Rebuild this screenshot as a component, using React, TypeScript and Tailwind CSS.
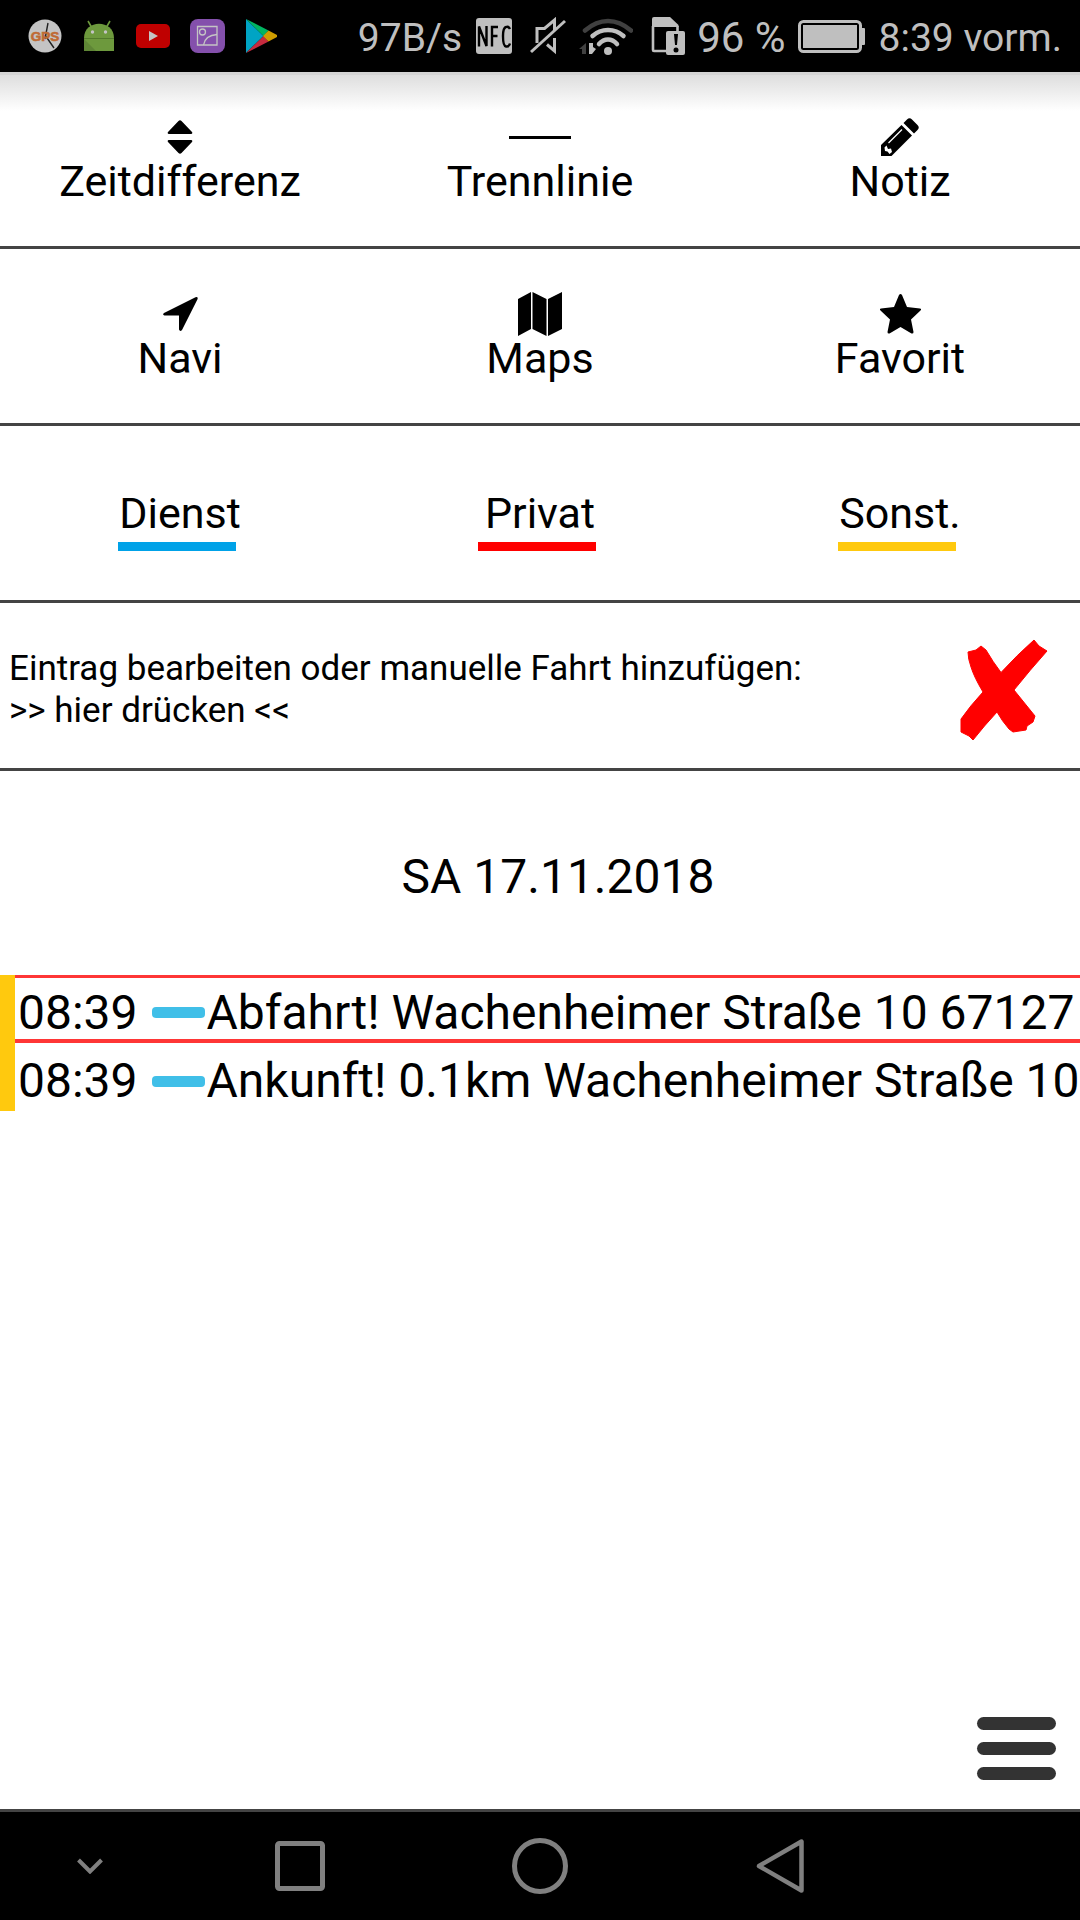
import React from "react";

const label = "text-[43px] leading-[52px]";

function Tile({ icon, text }: { icon: React.ReactNode; text: string }) {
  return (
    <button className="flex flex-col items-center">
      <span className="flex h-9 items-center [&>svg]:shrink-0">{icon}</span>
      <span className={label}>{text}</span>
    </button>
  );
}

function Category({ text, bar }: { text: string; bar: string }) {
  return (
    <button className="flex flex-col items-center">
      <span className={label}>{text}</span>
      <span className={`mt-[3px] mr-[6px] h-[9px] w-[118px] ${bar}`} />
    </button>
  );
}

function Trip({ time, text, line }: { time: string; text: string; line: string }) {
  return (
    <li className={`flex h-[68px] items-center overflow-hidden whitespace-nowrap pt-2 pl-[3px] text-[48px] ${line}`}>
      <span>{time}</span>
      <span className="ml-[14px] h-[11px] w-[53px] shrink-0 rounded-sm bg-[#40bfe8]" />
      <span className="ml-0.5">{text}</span>
    </li>
  );
}

function StatusBar() {
  return (
    <header className="flex h-[72px] shrink-0 items-center justify-between bg-black pr-[18px] pl-7 text-[#bfbfbf]">
      <div className="flex items-center">
        <svg className="h-[34px] w-[34px]" viewBox="0 0 34 34">
          <circle cx="17" cy="17" r="16.5" fill="#c4c4c4" />
          <path d="M17 20 20 4M17 16l9 13" stroke="#222" strokeWidth="1.4" fill="none" />
          <text x="17" y="22" textAnchor="middle" fontSize="13.5" fontWeight="700" fontFamily="Liberation Sans, sans-serif" fill="#bf6a33" stroke="#bf6a33" strokeWidth="0.6">GPS</text>
        </svg>
        <svg className="ml-[22px] h-8 w-[30px]" viewBox="0 0 30 32">
          <path d="M4 1l4 7M26 1l-4 7" stroke="#6d993d" strokeWidth="1.6" />
          <path d="M0 18C0 -1 30 -1 30 18V31H0Z" fill="#6d993d" />
          <path d="M0 19l12 12H0Z" fill="#5f8636" />
          <path d="M0 18.500H30" stroke="#527a2b" strokeWidth="1" />
          <circle cx="8.500" cy="12" r="1.700" fill="#c4c4c4" />
          <circle cx="21.500" cy="12" r="1.700" fill="#c4c4c4" />
        </svg>
        <svg className="ml-[22px] h-6 w-[34px]" viewBox="0 0 34 24">
          <rect width="34" height="24" rx="5" fill="#bf0000" />
          <path d="M13 7l9 5-9 5Z" fill="#c4c4c4" />
        </svg>
        <svg className="ml-5 h-[34px] w-[35px]" viewBox="0 0 35 34">
          <rect width="35" height="34" rx="8" fill="#8450ac" />
          <g fill="none" stroke="#c4c4c4" strokeWidth="1.300">
            <path d="M7.500 7.500h19.500v18.500h-19.500Z" />
            <circle cx="12.500" cy="13" r="3" />
            <path d="M13.500 26c1-6 6-10 13.500-10.500" />
          </g>
        </svg>
        <svg className="ml-[21px] h-[34px] w-[31px]" viewBox="0 0 31 34">
          <path d="M0 0 17.500 17 0 34Z" fill="#00a4c4" />
          <path d="M0 0l22.500 11.500-5 5.500Z" fill="#00b562" />
          <path d="M0 34l22.500-11.500-5-5.500Z" fill="#c62a3e" />
          <path d="M22.500 11.500 31 16q1 1 0 2l-8.500 4.500-5.500-5.500Z" fill="#cf9d00" />
        </svg>
      </div>
      <div className="flex items-center text-[39px] leading-[48px] whitespace-nowrap [&>span]:mt-[3px]">
        <span>97B/s</span>
        <svg className="ml-[14px] h-9 w-9" viewBox="0 0 36 36">
          <rect width="36" height="36" rx="3" fill="#bfbfbf" />
          <path d="M3 28.500V8.500L10.500 28V8M16 28.500V9h6M16 18h5.500M34 11q-1.500-3-4-2-3 1-3 9 0 10 3 10.500 3 .5 4-3" stroke="#000" strokeWidth="2.400" fill="none" />
        </svg>
        <svg className="ml-[18px] h-[38px] w-9" viewBox="0 0 36 38">
          <g fill="none" stroke="#bfbfbf" strokeWidth="3">
            <path d="M7 26V11.500H14.500L24.500 3V13M24.500 21v13l-7.500-6.500" />
            <path d="M1 35 35 4" />
          </g>
        </svg>
        <svg className="ml-[13px] h-[37px] w-[54px]" viewBox="0 0 54 37">
          <g fill="none" strokeWidth="4.500" strokeLinecap="round">
            <path d="M6 12.500Q17 3 29 3t23 9.500" stroke="#404040" />
            <path d="M13.500 18Q20 12 29 12t15.500 6" stroke="#bfbfbf" />
            <path d="M20 26Q24 21.500 29 21.500t9 4.500" stroke="#bfbfbf" />
          </g>
          <circle cx="29" cy="33" r="4" fill="#bfbfbf" />
          <path d="M7 25v11H3v-5H0Z" fill="#404040" />
          <path d="M10 36V25h4v4l3 2-4 5Z" fill="#bfbfbf" />
        </svg>
        <svg className="ml-[18px] h-[38px] w-[34px]" viewBox="0 0 34 38">
          <path d="M2 9V33q0 1 1 1H15M26.500 14V9" fill="none" stroke="#bfbfbf" strokeWidth="2.600" />
          <path d="M1 10V2q0-2 2-2H19l8.500 8v2Z" fill="#bfbfbf" />
          <rect x="15" y="14" width="19" height="24" rx="2" fill="#bfbfbf" />
          <path d="M23 17h4l-1 11h-2Z" fill="#000" />
          <circle cx="25" cy="33" r="2.500" fill="#000" />
        </svg>
        <span className="ml-3 text-[42px]">96 %</span>
        <svg className="ml-3 h-[33px] w-[67px]" viewBox="0 0 67 33">
          <rect x="1.500" y="1.500" width="61" height="30" rx="4" fill="none" stroke="#bfbfbf" strokeWidth="3" />
          <rect x="5" y="5" width="54" height="23" fill="#bfbfbf" />
          <rect x="63" y="8" width="4" height="17" rx="1" fill="#bfbfbf" />
        </svg>
        <span className="ml-[14px]">8:39 vorm.</span>
      </div>
    </header>
  );
}

export default function App() {
  return (
    <div className="flex min-h-screen flex-col bg-white font-[Roboto,sans-serif] text-black">
      <StatusBar />
      <main className="flex grow flex-col">
        <section className="grid h-[177px] grid-cols-3 items-start border-t-3 border-b-3 border-t-[#d4d4d4] border-b-[#444] bg-linear-to-b from-[#dedede] to-white bg-[length:100%_36px] bg-no-repeat pt-11">
          <Tile
            text="Zeitdifferenz"
            icon={
              <svg className="h-[34px] w-[26px]" viewBox="0 0 26 34">
                <path d="M11.500 1q1.500-1.500 3 0L25 12q1 2-1 2H2q-2 0-1-2ZM11.500 33q1.500 1.500 3 0L25 22q1-2-1-2H2q-2 0-1 2Z" />
              </svg>
            }
          />
          <Tile text="Trennlinie" icon={<span className="h-[3px] w-[62px] bg-black" />} />
          <Tile
            text="Notiz"
            icon={
              <svg className="h-[38px] w-[38px]" viewBox="0 0 38 38">
                <path d="M0 38V27L20.500 7 31 17.500 10.500 38ZM22.500 5 26 1.500q2.500-2.500 5 0L36.500 7q2.500 2.500 0 5L33 15.500Z" />
                <path d="M7.500 25 21 11.500" stroke="#fff" strokeWidth="1.200" />
                <path d="M3.500 29.500 5.500 27.500 7 31 10 30.500 11 34 8.500 36 6.500 33.500 4 33Z" fill="#fff" />
              </svg>
            }
          />
        </section>
        <section className="grid h-[177px] grid-cols-3 items-start border-b-3 border-[#444] pt-[47px]">
          <Tile
            text="Navi"
            icon={
              <svg className="h-[34px] w-[35px]" viewBox="0 0 35 34">
                <path d="M1 16 32.500.3Q35.300-.5 34.500 2.300L19 33q-2 2-3-.5V18.500H1.500q-2.500-1-.5-2.500Z" />
              </svg>
            }
          />
          <Tile
            text="Maps"
            icon={
              <svg className="h-11 w-11" viewBox="0 0 44 44">
                <path d="M0 7 13 0V37L0 44ZM14.500 0 28.500 7V44l-14-7ZM30 7 44 0V37L30 44Z" />
              </svg>
            }
          />
          <Tile
            text="Favorit"
            icon={
              <svg className="h-10 w-[41px]" viewBox="0 0 41 40">
                <path d="M19 1q1.500-2 3 0L27 13l13 1.500q2 .5.500 2L31 25.500 33.500 38q0 2-2 1.500L20.500 33 9.500 39.500q-2 .5-2-1.500L10 25.500.5 16.500q-1.500-1.500.5-2L14 13Z" />
              </svg>
            }
          />
        </section>
        <section className="grid h-[177px] grid-cols-3 items-start border-b-3 border-[#444] pt-[61px]">
          <Category text="Dienst" bar="bg-[#00a2e8]" />
          <Category text="Privat" bar="bg-[#ff0000]" />
          <Category text="Sonst." bar="bg-[#ffc90e]" />
        </section>
        <section className="flex h-[168px] items-center justify-between border-b-3 border-[#444] pt-2 pr-8 pl-[9px]">
          <button className="text-left text-[35px] leading-[42px]">
            Eintrag bearbeiten oder manuelle Fahrt hinzufügen:
            <br />
            &gt;&gt; hier drücken &lt;&lt;
          </button>
          <button aria-label="Schließen">
            <svg className="h-[102px] w-[88px]" viewBox="0 0 88 102">
              <path
                d="M8 13 16 11 21 7 26 11Q33 23 41 33.500Q57 16 74 1L79 7 87 12Q70 31 54 51L75 77 73 83 67 87 66 91 53 93 49 90Q42 82 37 73Q24 87 13 101L9 97 1 93 1 80Q10 67 23 53Q14 38 11 28Q8 20 8 13Z"
                fill="#f00"
                stroke="#f00"
                strokeLinejoin="round"
              />
            </svg>
          </button>
        </section>
        <h1 className="mt-[78px] pl-9 text-center text-[48px] leading-[56px]">SA 17.11.2018</h1>
        <ul className="mt-[70px] border-l-[15px] border-[#ffc90e]">
          <Trip time="08:39" text="Abfahrt! Wachenheimer Straße 10 67127" line="border-t-3 border-b-4 border-[#ff3636]" />
          <Trip time="08:39" text="Ankunft! 0.1km Wachenheimer Straße 10" line="" />
        </ul>
        <button aria-label="Menü" className="mt-auto mr-6 mb-[29px] flex flex-col gap-3 self-end">
          <span className="h-[13px] w-[79px] rounded-full bg-[#333]" />
          <span className="h-[13px] w-[79px] rounded-full bg-[#333]" />
          <span className="h-[13px] w-[79px] rounded-full bg-[#333]" />
        </button>
      </main>
      <nav className="flex h-[111px] shrink-0 border-t-3 border-[#444] bg-black">
        <button aria-label="Einklappen" className="flex w-1/6 items-center justify-center">
          <svg className="h-4 w-[26px]" viewBox="0 0 26 16" fill="none" stroke="#808080" strokeWidth="4">
            <path d="M1.500 2 13 13.500 24.500 2" />
          </svg>
        </button>
        <button aria-label="Übersicht" className="flex w-2/9 items-center justify-center">
          <svg className="h-[50px] w-[50px]" viewBox="0 0 50 50" fill="none" stroke="#808080" strokeWidth="5">
            <rect x="2.500" y="2.500" width="45" height="45" rx="2" />
          </svg>
        </button>
        <button aria-label="Startseite" className="flex w-2/9 items-center justify-center">
          <svg className="h-14 w-14" viewBox="0 0 56 56" fill="none" stroke="#808080" strokeWidth="5">
            <circle cx="28" cy="28" r="25.500" />
          </svg>
        </button>
        <button aria-label="Zurück" className="flex w-2/9 items-center justify-center">
          <svg className="h-[54px] w-12" viewBox="0 0 48 54" fill="none" stroke="#808080" strokeWidth="4.500" strokeLinejoin="round">
            <path d="M45.500 2.500V51.500L3 27Z" />
          </svg>
        </button>
      </nav>
    </div>
  );
}
